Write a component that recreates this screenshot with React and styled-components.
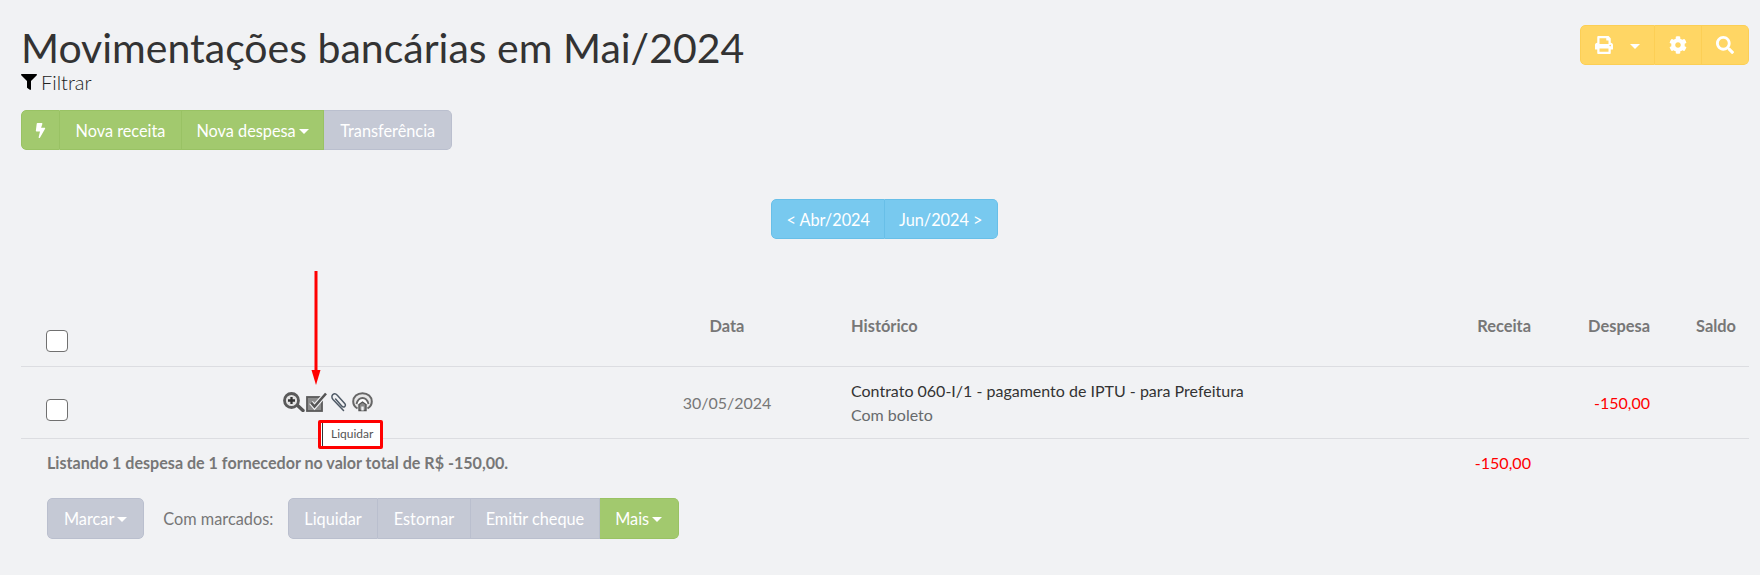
import React from 'react';
import styled, { createGlobalStyle } from 'styled-components';
import { FaFilter, FaBolt, FaPrint, FaCog, FaSearch } from 'react-icons/fa';

const Global = createGlobalStyle`
  html, body { margin: 0; padding: 0; background: #f1f2f4; }
  body { font-family: Lato, "Open Sans", sans-serif; color: #676a6c; }
`;

const Page = styled.div`
  position: relative;
  height: 575px;
  padding: 23px 11px 0 21px;
  box-sizing: border-box;
  overflow: hidden;
`;

const Header = styled.div`
  display: flex;
  justify-content: space-between;
  align-items: flex-start;
`;

const Title = styled.h1`
  margin: 0;
  font-size: 41px;
  font-weight: 400;
  line-height: 50px;
  color: #333;
`;

const FilterLink = styled.div`
  display: flex;
  align-items: center;
  gap: 4px;
  height: 18px;
  font-size: 20px;
  font-weight: 300;
  color: #222;
  svg { font-size: 16px; color: #000; }
`;

const Group = styled.div`
  display: inline-flex;
  height: 40px;
  border-radius: 5px;
  overflow: hidden;
`;

const ToolGroup = styled(Group)`
  margin-top: 2px;
`;

const BulkGroup = styled(Group)`
  height: 41px;
`;

const palette = {
  green: ['#a2c96e', '#99c264'],
  gray: ['#c5c9d5', '#babfce'],
  blue: ['#78c9ef', '#68bfe8'],
  yellow: ['#ffd664', '#fccf55'],
};

const Btn = styled.div`
  display: flex;
  align-items: center;
  justify-content: center;
  gap: 3px;
  box-sizing: border-box;
  height: 100%;
  padding: 0 ${(p) => p.$pad ?? 16}px;
  font-size: 16.3px;
  color: #fff;
  background: ${(p) => palette[p.$tone][0]};
  border: 1px solid ${(p) => palette[p.$tone][1]};
  border-left-width: ${(p) => (p.$first ? 1 : 0)}px;
  &:first-child { border-radius: 5px 0 0 5px; }
  &:last-child { border-radius: 0 5px 5px 0; }
  &:only-child { border-radius: 5px; }
`;

const Caret = styled.span`
  display: inline-block;
  width: 0;
  height: 0;
  margin-top: 2px;
  margin-left: ${(p) => p.$gap ?? 0}px;
  border-left: 5px solid transparent;
  border-right: 5px solid transparent;
  border-top: 5px solid #fff;
`;

const ActionBar = styled.div`
  margin-top: 19px;
`;

const Pager = styled.div`
  display: flex;
  justify-content: center;
  margin: 49px 0 0 -1px;
`;

const Row = styled.div`
  display: grid;
  grid-template-columns: 60px 536px 220px 583px 124px 119px 86px;
  align-items: center;
`;

const HeadRow = styled(Row)`
  margin-top: 58px;
  height: 69px;
  align-items: end;
  border-bottom: 1px solid #dcdde1;
  font-size: 16.4px;
  font-weight: 700;
  color: #777;
  & > div {
    line-height: 20px;
    margin-bottom: 30px;
  }
`;

const BodyRow = styled(Row)`
  height: 71px;
  border-bottom: 1px solid #dcdde1;
  font-size: 16px;
`;

const FootRow = styled(Row)`
  height: 46px;
  font-size: 16.1px;
  font-weight: 700;
  color: #777;
`;

const CheckBox = styled.span`
  display: block;
  box-sizing: border-box;
  width: 22px;
  height: 22px;
  margin-left: 25px;
  background: #fff;
  border: 1.5px solid #707070;
  border-radius: 4px;
`;

const HeadCheck = styled(CheckBox)`
  margin-bottom: 14px;
`;

const BodyCheck = styled(CheckBox)`
  margin-top: 14px;
`;

const Icons = styled.div`
  display: flex;
  align-items: center;
  gap: 1px;
  padding-left: 202px;
  margin-top: -1px;
`;

const DateCell = styled.div`
  text-align: center;
  color: #777;
`;

const Hist = styled.div`
  padding-left: 14px;
  line-height: 24px;
`;

const HistMain = styled.div`
  color: #333;
`;

const Num = styled.div`
  padding-right: 13px;
  text-align: right;
  color: ${(p) => (p.$red ? '#f00' : 'inherit')};
  font-weight: ${(p) => (p.$red ? 400 : 'inherit')};
`;

const Summary = styled.div`
  grid-column: 1 / span 4;
  padding-left: 26px;
`;

const Bulk = styled.div`
  display: flex;
  align-items: center;
  margin: 13px 0 0 26px;
`;

const BulkLabel = styled.span`
  margin: 0 15px 0 19px;
  font-size: 16.3px;
  color: #777;
`;

const Arrow = styled.svg`
  position: absolute;
  left: 311px;
  top: 271px;
`;

const Tooltip = styled.div`
  position: absolute;
  left: 318px;
  top: 420px;
  box-sizing: border-box;
  width: 65px;
  height: 29px;
  padding-left: 10px;
  background: #fff;
  border: 3px solid #f00;
  border-radius: 2px;
  font-size: 12px;
  line-height: 22px;
  color: #555;
  &::before {
    content: '';
    position: absolute;
    left: 1px;
    top: 0;
    bottom: 0;
    width: 1px;
    background: #333;
  }
`;

function ZoomIcon() {
  return (
    <svg width="22" height="20" viewBox="0 0 22 20">
      <path d="M13 12l7 6.5" stroke="#555" strokeWidth="3.4" strokeLinecap="round" />
      <circle cx="8.5" cy="8.5" r="7" fill="#e4e4e4" stroke="#5a5a5a" strokeWidth="2.8" />
      <path d="M5 8.5h7M8.5 5v7" stroke="#333" strokeWidth="2.3" />
    </svg>
  );
}

function CheckIcon() {
  return (
    <svg width="22" height="20" viewBox="0 0 22 20">
      <rect x="1" y="5" width="15" height="14" fill="#8c8c8c" stroke="#5a5a5a" strokeWidth="1.8" />
      <path d="M5 10.5l3.5 4L20 1.5" fill="none" stroke="#f1f2f4" strokeWidth="4.8" />
      <path d="M5 10.5l3.5 4L20 1.5" fill="none" stroke="#555" strokeWidth="2.6" />
    </svg>
  );
}

function ClipIcon() {
  return (
    <svg width="22" height="20" viewBox="0 0 22 20">
      <path
        d="M14.5 18.5L4 7.5C2.5 5.8 2.6 3.6 3.8 2.6 5.2 1.5 7 1.8 8.3 3.2l7.4 8.2c1 1.2.8 2.6 0 3.2-.9.7-2.1.4-3-.6L6.6 7"
        fill="none"
        stroke="#4f5a66"
        strokeWidth="1.5"
        strokeLinecap="round"
      />
    </svg>
  );
}

function ReceiptIcon() {
  return (
    <svg width="21" height="20" viewBox="0 0 21 20">
      <path d="M5.5 16.5C2.6 14.8 1.2 12 1.2 9.5 1.2 4.8 5.2 1.2 10.5 1.2s9.3 3.6 9.3 8.3c0 2.5-1.4 5.3-4.3 7" fill="#e6e6e6" stroke="#666" strokeWidth="2" />
      <path d="M4.5 12C5.5 8 8 6 10.5 6s5 2 6 6" fill="#fff" stroke="#666" strokeWidth="1.8" />
      <path d="M7 18.5v-6l3.5-2.5 3.5 2.5v6z" fill="#8a8a8a" stroke="#555" strokeWidth="1.4" />
      <path d="M9.3 18.5v-4h2.4v4z" fill="#f1f2f4" />
    </svg>
  );
}

export default function App() {
  return (
    <Page>
      <Global />
      <Header>
        <div>
          <Title>Movimentações bancárias em Mai/2024</Title>
          <FilterLink><FaFilter />Filtrar</FilterLink>
        </div>
        <ToolGroup>
          <Btn $tone="yellow" $first $pad={14}><FaPrint size={18} /><Caret $gap={14} /></Btn>
          <Btn $tone="yellow" $pad={14}><FaCog size={18} /></Btn>
          <Btn $tone="yellow" $pad={14}><FaSearch size={18} /></Btn>
        </ToolGroup>
      </Header>

      <ActionBar>
        <Group>
          <Btn $tone="green" $first $pad={11}><FaBolt size={15} /></Btn>
          <Btn $tone="green" $pad={15.5}>Nova receita</Btn>
          <Btn $tone="green" $pad={14.5}>Nova despesa<Caret /></Btn>
          <Btn $tone="gray" $pad={16}>Transferência</Btn>
        </Group>
      </ActionBar>

      <Pager>
        <Group>
          <Btn $tone="blue" $first $pad={14}>&lt; Abr/2024</Btn>
          <Btn $tone="blue" $pad={14}>Jun/2024 &gt;</Btn>
        </Group>
      </Pager>

      <HeadRow>
        <HeadCheck />
        <div />
        <DateCell>Data</DateCell>
        <Hist>Histórico</Hist>
        <Num>Receita</Num>
        <Num>Despesa</Num>
        <Num>Saldo</Num>
      </HeadRow>

      <BodyRow>
        <BodyCheck />
        <Icons>
          <ZoomIcon />
          <CheckIcon />
          <ClipIcon />
          <ReceiptIcon />
        </Icons>
        <DateCell>30/05/2024</DateCell>
        <Hist>
          <HistMain>Contrato 060-I/1 - pagamento de IPTU - para Prefeitura</HistMain>
          <div>Com boleto</div>
        </Hist>
        <div />
        <Num $red>-150,00</Num>
        <div />
      </BodyRow>

      <FootRow>
        <Summary>Listando 1 despesa de 1 fornecedor no valor total de R$ -150,00.</Summary>
        <Num $red>-150,00</Num>
      </FootRow>

      <Bulk>
        <BulkGroup>
          <Btn $tone="gray" $first>Marcar<Caret /></Btn>
        </BulkGroup>
        <BulkLabel>Com marcados:</BulkLabel>
        <BulkGroup>
          <Btn $tone="gray" $first $pad={15}>Liquidar</Btn>
          <Btn $tone="gray">Estornar</Btn>
          <Btn $tone="gray" $pad={14.5}>Emitir cheque</Btn>
          <Btn $tone="green" $pad={15.5}>Mais<Caret /></Btn>
        </BulkGroup>
      </Bulk>

      <Arrow width="10" height="115" viewBox="0 0 10 115">
        <path d="M5 0v104" stroke="#f00" strokeWidth="3" />
        <path d="M0.5 99h9l-4.5 15z" fill="#f00" />
      </Arrow>
      <Tooltip>Liquidar</Tooltip>
    </Page>
  );
}
